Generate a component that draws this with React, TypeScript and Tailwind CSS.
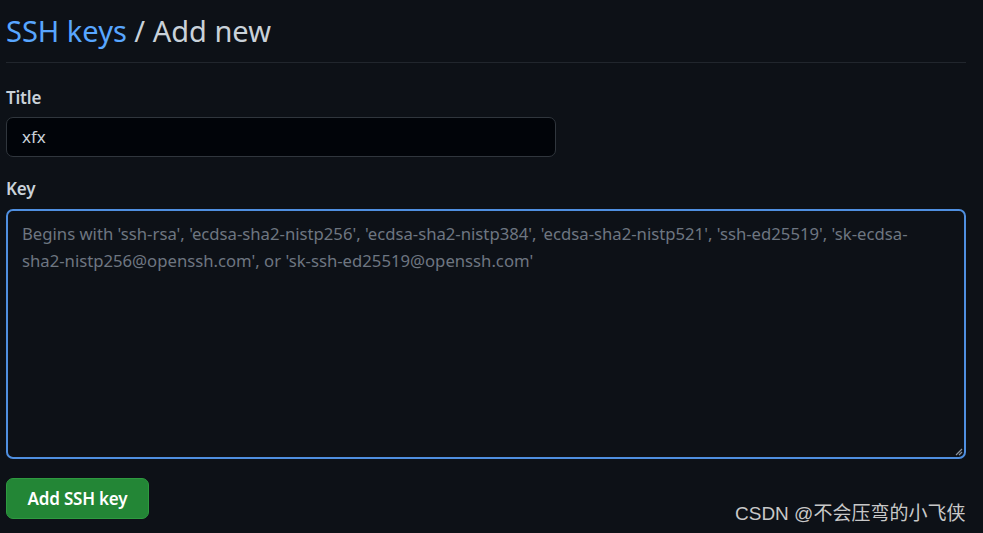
export default function App() {
  return (
    <div
      className="relative w-[983px] h-[533px] overflow-hidden bg-[#0d1117] text-[#c9d1d9]"
      style={{ fontFamily: '"Noto Sans", "Open Sans", sans-serif' }}
    >
      <div className="pl-[6px] pr-[17px]">
        <div className="h-[63px] border-b border-[#21262d] flex items-start pt-[11px]">
          <h2 className="text-[29px] leading-[40px] font-normal">
            <span className="text-[#58a6ff]">SSH keys</span>
            <span className="text-[#c9d1d9]"> / Add new</span>
          </h2>
        </div>
        <div className="pt-[24px]">
          <label className="block text-[17px] leading-[22px] font-semibold text-[#c9d1d9] tracking-[-0.2px]">
            Title
          </label>
          <div className="mt-[8px] w-[550px] h-[40px] rounded-[7px] border border-[#30363d] bg-[#010409] flex items-center px-[15px] text-[17px] text-[#c9d1d9]">
            xfx
          </div>
        </div>
        <div className="pt-[21px]">
          <label className="block text-[17px] leading-[22px] font-semibold text-[#c9d1d9] tracking-[-0.2px]">
            Key
          </label>
          <div className="relative mt-[9px] w-[960px] h-[250px] rounded-[7px] border-2 border-[#4f8fe0] bg-[#0d1117] px-[14px] pt-[9px] text-[16.7px] leading-[27px] text-[#6e7681]">
            Begins with 'ssh-rsa', 'ecdsa-sha2-nistp256', 'ecdsa-sha2-nistp384', 'ecdsa-sha2-nistp521', 'ssh-ed25519', 'sk-ecdsa-
            <br />
            sha2-nistp256@openssh.com', or 'sk-ssh-ed25519@openssh.com'
            <svg className="absolute right-[1px] bottom-[1px]" width="9" height="9" viewBox="0 0 9 9">
              <path d="M8 2 L2 8 M8 5 L5 8" stroke="#8b949e" strokeWidth="1.2" />
            </svg>
          </div>
        </div>
        <div className="pt-[19px]">
          <button className="h-[41px] w-[143px] rounded-[7px] bg-[#238636] border border-[#2e9a40] text-white text-[17px] font-semibold tracking-[-0.2px] flex items-center justify-center">
            Add SSH key
          </button>
        </div>
      </div>
      <div
        className="absolute left-[735px] top-[500px] text-[19px] leading-[28px] text-[#c8c8c8]"
        style={{ fontFamily: '"Liberation Sans", "Noto Sans CJK SC", sans-serif' }}
      >
        CSDN @不会压弯的小飞侠
      </div>
    </div>
  );
}
